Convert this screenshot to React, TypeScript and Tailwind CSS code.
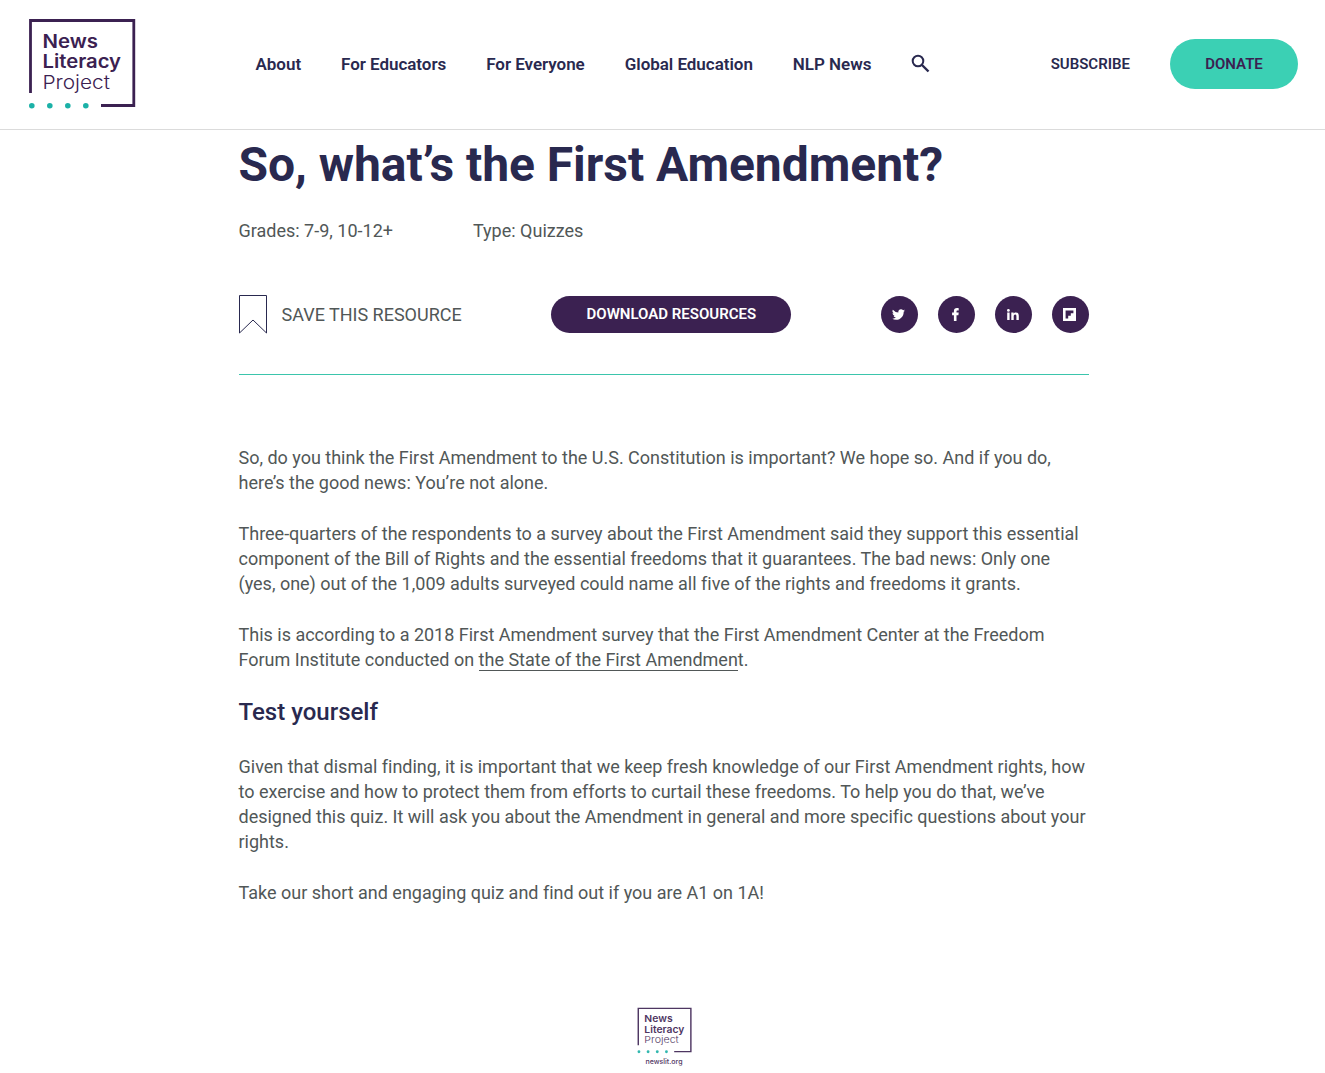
import React from 'react';

const navItems = ['About', 'For Educators', 'For Everyone', 'Global Education', 'NLP News'];

const LogoMark = ({ className }: { className: string }) => (
  <svg viewBox="0 0 108 92" className={className} fill="none" role="img" aria-label="News Literacy Project">
    <path d="M2.5 75V2.5H105.8V87.5H73" stroke="#3b2151" strokeWidth="2.8" />
    {[3.8, 21.8, 39.8, 57.8].map(cx => (
      <circle key={cx} cx={cx} cy="87.7" r="2.8" fill="#1bb1a7" />
    ))}
    <g fill="#3b2151" fontFamily="Inter, sans-serif" fontSize="18.6">
      <text x="14.5" y="29.5" fontWeight="600" textLength="55.5" lengthAdjust="spacingAndGlyphs">News</text>
      <text x="14.5" y="50" fontWeight="600" textLength="78.5" lengthAdjust="spacingAndGlyphs">Literacy</text>
      <text x="14.5" y="70.5" fontWeight="300" textLength="67.5" lengthAdjust="spacingAndGlyphs">Project</text>
    </g>
  </svg>
);

const icons = {
  twitter: (
    <svg viewBox="0 0 24 24" className="mr-px h-[13px] w-[13px]" fill="currentColor">
      <path d="M23.95 4.57a10 10 0 0 1-2.82.77 4.96 4.96 0 0 0 2.16-2.72c-.95.55-2 .95-3.13 1.18a4.92 4.92 0 0 0-8.38 4.48A13.93 13.93 0 0 1 1.64 3.16a4.92 4.92 0 0 0 1.52 6.57 4.9 4.9 0 0 1-2.23-.61v.06a4.92 4.92 0 0 0 3.95 4.83 5 5 0 0 1-2.21.08 4.94 4.94 0 0 0 4.6 3.42A9.87 9.87 0 0 1 0 19.54a13.99 13.99 0 0 0 7.55 2.21c9.05 0 14-7.5 14-13.98 0-.21 0-.42-.02-.63a9.94 9.94 0 0 0 2.42-2.57z" />
    </svg>
  ),
  facebook: (
    <svg viewBox="0 0 7 13" className="mr-px h-[13px] w-[7px]" fill="currentColor">
      <path d="M1.9 13V7.3H.1V4.6H1.9V3.3C1.9 1.2 3 .1 5 .1c.8 0 1.4.1 1.7.1v2.3H5.5c-.8 0-1 .4-1 1.1v1h2.2l-.3 2.7H4.5V13z" />
    </svg>
  ),
  linkedin: (
    <svg viewBox="0 0 12 11" className="mr-px mt-px h-[11px] w-3" fill="currentColor">
      <circle cx="1.4" cy="1.4" r="1.4" />
      <path d="M.2 3.6h2.4V11H.2zM4.3 3.6h2.3v1c.4-.7 1.2-1.2 2.3-1.2 2.4 0 2.9 1.5 2.9 3.6v4H9.4V7.4c0-.9 0-2-1.2-2S6.7 6.4 6.7 7.4V11H4.3z" />
    </svg>
  ),
  flipboard: (
    <svg viewBox="0 0 13 13" className="mr-px h-[13px] w-[13px]" fill="currentColor">
      <path fillRule="evenodd" d="M0 0h13v13H0zM2.6 2.6v7.8h2.6V7.8h2.6V5.2h2.6V2.6z" />
    </svg>
  ),
};

const App = () => {
  return (
    <div className="min-h-[1073px] bg-white font-[Roboto,sans-serif] text-[#515757]">
      <header className="flex h-[130px] items-start border-b border-[#dbdbdb] pl-7 pr-[27px]">
        <LogoMark className="mt-[18px] h-[92px] w-[108px] shrink-0" />
        <nav className="ml-[119.5px] mt-[52px] flex h-[26px] items-center gap-10 text-[17px] font-semibold tracking-[-0.035px] text-[#29294f]">
          {navItems.map(item => (
            <a key={item} href="#" className="whitespace-nowrap">{item}</a>
          ))}
          <button aria-label="Search" className="-mt-1">
            <svg viewBox="0 0 19 19" className="h-[19px] w-[19px]" fill="none" stroke="currentColor">
              <circle cx="7" cy="7" r="5.3" strokeWidth="2" />
              <path d="M11 11l6.5 6.5" strokeWidth="2.4" />
            </svg>
          </button>
        </nav>
        <div className="ml-auto mt-[39px] flex items-center gap-10 text-[15px] font-semibold text-[#29294f]">
          <a href="#">SUBSCRIBE</a>
          <a href="#" className="flex h-[50px] w-32 items-center justify-center rounded-full bg-[#3bd0b4] text-[#3b2151]">DONATE</a>
        </div>
      </header>

      <main className="ml-[238.5px] w-[850px]">
        <h1 className="pt-[5px] text-[48px] font-bold leading-[60px] tracking-[-0.04px] text-[#29294f]">So, what’s the First Amendment?</h1>
        <div className="mt-[23px] flex gap-20 text-lg leading-[25px]">
          <span>Grades: 7-9, 10-12+</span>
          <span>Type: Quizzes</span>
        </div>

        <div className="mt-[51px] flex h-10 items-center justify-between">
          <button className="mt-0.5 flex items-center gap-[14px] text-lg">
            <svg viewBox="0 0 29 40" className="h-10 w-[29px]" fill="none" stroke="#29294f">
              <path d="M.5.5h27v37.5L14 25 .5 38z" />
            </svg>
            <span>SAVE THIS RESOURCE</span>
          </button>
          <button className="h-[37px] w-60 rounded-full bg-[#3b2151] text-[15px] font-semibold text-white">DOWNLOAD RESOURCES</button>
          <div className="-mr-[0.5px] flex gap-5">
            {Object.entries(icons).map(([name, icon]) => (
              <a key={name} href="#" aria-label={name} className="flex h-[37px] w-[37px] items-center justify-center rounded-full bg-[#3b2151] text-white">
                {icon}
              </a>
            ))}
          </div>
        </div>
        <hr className="mt-10 border-[#3bc5ac]" />

        <article className="pt-[70.2px] text-lg leading-[25.2px] tracking-[-0.005px]">
          <p className="mb-[25.4px]">So, do you think the First Amendment to the U.S. Constitution is important? We hope so. And if you do, <br />here’s the good news: You’re not alone.</p>
          <p className="mb-[25.2px]">Three-quarters of the respondents to a survey about the First Amendment said they support this essential <br />component of the Bill of Rights and the essential freedoms that it guarantees. The bad news: Only one <br />(yes, one) out of the 1,009 adults surveyed could name all five of the rights and freedoms it grants.</p>
          <p>This is according to a 2018 First Amendment survey that the First Amendment Center at the Freedom <br />Forum Institute conducted on <a href="#" className="border-b border-[#515757]">the State of the First Amendmen</a>t.</p>
          <h2 className="mb-[26px] mt-[24.6px] text-2xl font-medium leading-[31px] text-[#29294f]">Test yourself</h2>
          <p className="mb-[25.2px]">Given that dismal finding, it is important that we keep fresh knowledge of our First Amendment rights, how <br />to exercise and how to protect them from efforts to curtail these freedoms. To help you do that, we’ve <br />designed this quiz. It will ask you about the Amendment in general and more specific questions about your <br />rights.</p>
          <p>Take our short and engaging quiz and find out if you are A1 on 1A!</p>
        </article>

        <footer className="ml-px mt-[102px] flex flex-col items-center opacity-90">
          <LogoMark className="h-[47px] w-[55px]" />
          <span className="mt-[3px] font-[Inter,sans-serif] text-[7px] font-medium leading-[9px] text-[#3b2151]">newslit.org</span>
        </footer>
      </main>
    </div>
  );
};

export default App;
